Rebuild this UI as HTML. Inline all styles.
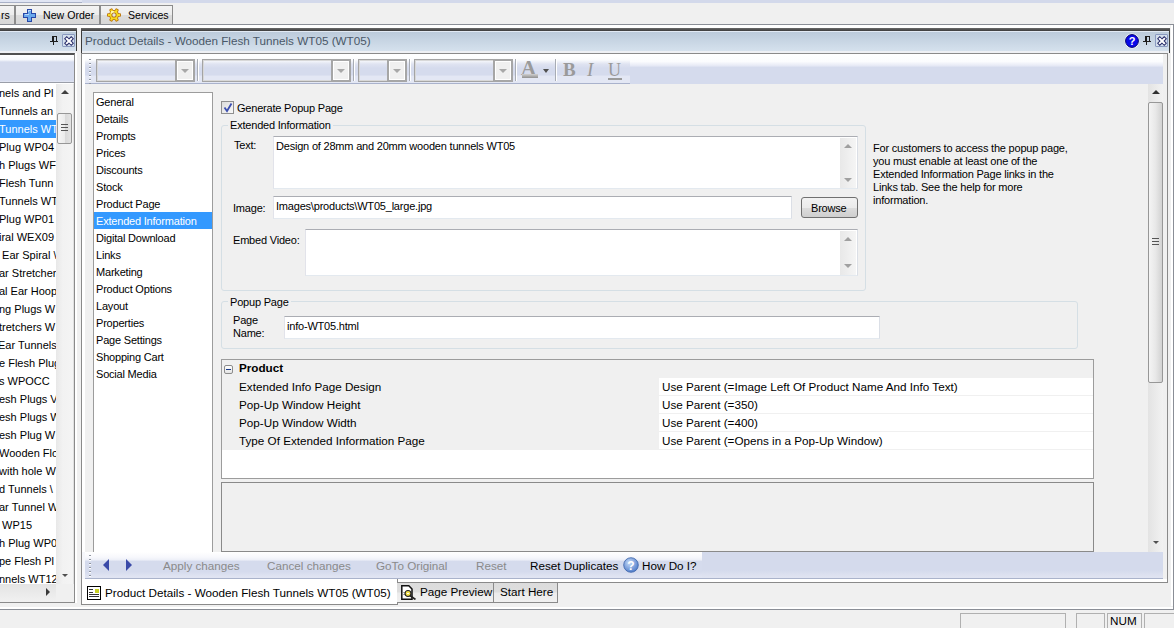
<!DOCTYPE html>
<html><head><meta charset="utf-8">
<style>
html,body{margin:0;padding:0;}
body{width:1174px;height:628px;overflow:hidden;position:relative;background:#f0f0f0;font-family:"Liberation Sans",sans-serif;color:#000;}
.a{position:absolute;}
.t{position:absolute;white-space:nowrap;font-size:11px;letter-spacing:-0.2px;line-height:13px;}
.s{position:absolute;white-space:nowrap;font-size:11.7px;line-height:14px;}
.tab{position:absolute;top:5px;height:19px;border:1px solid #8c8c8c;border-bottom:none;background:linear-gradient(#f3f3f3 0,#ececec 50%,#dcdcdc 51%,#d8d8d8 100%);box-sizing:border-box;}
.hl{background:#3399ff;color:#fff;}
.tb{position:absolute;border:1px solid #a4a4a4;box-shadow:inset 0 0 0 1px #d8d8d8;box-sizing:border-box;}
.ddb{position:absolute;top:-1px;right:-1px;width:20px;height:23px;border:2px solid #a6a6a6;box-shadow:inset 0 0 0 1px #fff;background:#f0f0f0;box-sizing:border-box;}
.ddb:after{content:"";position:absolute;left:4px;top:8px;border-left:4px solid transparent;border-right:4px solid transparent;border-top:4px solid #a8a8a8;}
.sep{position:absolute;width:1px;background:#a8acb4;border-right:1px solid #fff;}
.box{position:absolute;background:#fff;border:1px solid #abadb3;border-left-color:#e2e3ea;border-right-color:#dbdfe6;border-bottom-color:#e3e9ef;box-sizing:border-box;}
.grp{position:absolute;border:1px solid #d5dfe5;border-radius:3px;box-sizing:border-box;}
.pr{position:absolute;left:0;height:18px;font-size:11px;text-indent:-1px;line-height:18px;white-space:nowrap;}
</style></head><body>

<!-- top strip -->
<div class="a" style="left:0;top:0;width:1174px;height:3px;background:#d3d9eb;"></div><div class="a" style="left:0;top:0;width:82px;height:2px;background:#e0e5f3;border-bottom:1px solid #a9b1c7;"></div>

<!-- top tabs -->
<div class="tab" style="left:-20px;width:35px;"><span class="t" style="left:20px;top:3px;font-size:10.5px;letter-spacing:0;">rs</span></div>
<div class="tab" style="left:15px;width:85px;">
  <svg class="a" style="left:7px;top:3px" width="13" height="13" viewBox="0 0 13 13" shape-rendering="crispEdges"><path d="M4 0h5v4h4v5h-4v4h-5v-4h-4v-5h4z" fill="#2848a8"/><path d="M5 1h3v4h4v3h-4v4h-3v-4h-4v-3h4z" fill="#6aa8ec"/><path d="M5 1h1v4h-4v1h4v-1M5 1h3v1h-3z" fill="#b8d8fa"/></svg>
  <span class="t" style="left:27px;top:3px;font-size:10.6px;letter-spacing:0;">New Order</span></div>
<div class="tab" style="left:100px;width:73px;">
  <svg class="a" style="left:6px;top:2px" width="14" height="14" viewBox="0 0 14 14"><g fill="#c07a10"><circle cx="7" cy="7" r="5"/><rect x="5.2" y="0" width="3.6" height="14" rx="1" transform="rotate(30 7 7)"/><rect x="5.2" y="0" width="3.6" height="14" rx="1" transform="rotate(-30 7 7)"/><rect x="0" y="5.2" width="14" height="3.6" rx="1"/></g><g fill="#f8dc20"><circle cx="7" cy="7" r="4"/><rect x="6" y="1" width="2" height="12" transform="rotate(30 7 7)"/><rect x="6" y="1" width="2" height="12" transform="rotate(-30 7 7)"/><rect x="1" y="6" width="12" height="2"/></g><circle cx="5.5" cy="4.5" r="1.8" fill="#fff8b0"/><circle cx="7" cy="7" r="2.6" fill="#b07018"/><circle cx="7" cy="7" r="1.7" fill="#e4e4e4"/></svg>
  <span class="t" style="left:27px;top:3px;font-size:10.6px;letter-spacing:0;">Services</span></div>
<div class="a" style="left:0;top:24px;width:1174px;height:1px;background:#8a8e96;"></div>
<div class="a" style="left:0;top:25px;width:1174px;height:3px;background:#fff;"></div>

<!-- ============ LEFT PANEL ============ -->
<div class="a" style="left:0;top:28px;width:77px;height:3px;background:linear-gradient(#6a6a6a,#3c3c3c);"></div>
<div class="a" style="left:0;top:31px;width:76px;height:20px;background:linear-gradient(#e2eaf4 0,#e2eaf4 1px,#bccbdb 1px,#d5e1ed);border-right:1px solid #3c3c3c;"></div>
<!-- pin -->
<svg class="a" style="left:50px;top:35px" width="9" height="11" viewBox="0 0 9 11" shape-rendering="crispEdges"><g fill="#1e1e1e"><rect x="2" y="1" width="5" height="1"/><rect x="2" y="1" width="2" height="5"/><rect x="6" y="1" width="1" height="5"/><rect x="0" y="6" width="8" height="1"/><rect x="3" y="7" width="1" height="3"/></g></svg>
<div class="a" style="left:62px;top:34px;width:11px;height:11px;border:1px solid #8a9ac0;background:#d4dfec;border-radius:1px;"></div>
<svg class="a" style="left:64px;top:36px" width="10" height="10" viewBox="0 0 10 10"><path d="M2.8 2.8l4.4 4.4M7.2 2.8l-4.4 4.4" stroke="#262a68" stroke-width="4" stroke-linecap="square"/><path d="M2.8 2.8l4.4 4.4M7.2 2.8l-4.4 4.4" stroke="#fff" stroke-width="2" stroke-linecap="square"/></svg>
<div class="a" style="left:0;top:51px;width:76px;height:2px;background:#eef0f4;"></div>
<div class="a" style="left:0;top:53px;width:75px;height:550px;border-top:2px solid #505050;border-right:1px solid #8a8a8a;border-bottom:1px solid #8a8a8a;box-sizing:border-box;background:#f0f0f0;"></div>
<div class="a" style="left:0;top:55px;width:74px;height:27px;background:linear-gradient(#ffffff 0,#f6f8fc 18%,#d5dbed 26%,#d5dbed 94%,#e3e7f3 100%);"></div><div class="a" style="left:0;top:82px;width:74px;height:1px;background:#9a9ea8;"></div><div class="a" style="left:0;top:83px;width:73px;height:1px;background:#fff;"></div>
<!-- left list -->
<div class="a" style="left:0;top:84px;width:73px;height:500px;background:#fff;border-right:1px solid #e0e0e0;overflow:hidden;" id="llist">
<div class="pr" style="top:0px;width:56px;padding-left:0;">nels and Pl</div>
<div class="pr" style="top:18px;width:56px;padding-left:0;">Tunnels an</div>
<div class="pr hl" style="top:36px;width:56px;padding-left:0;">Tunnels WT</div>
<div class="pr" style="top:54px;width:56px;padding-left:0;">Plug WP04</div>
<div class="pr" style="top:72px;width:56px;padding-left:0;">h Plugs WF</div>
<div class="pr" style="top:90px;width:56px;padding-left:0;">Flesh Tunn</div>
<div class="pr" style="top:108px;width:56px;padding-left:0;">Tunnels WT</div>
<div class="pr" style="top:126px;width:56px;padding-left:0;">Plug WP01</div>
<div class="pr" style="top:144px;width:56px;padding-left:0;">iral WEX09</div>
<div class="pr" style="top:162px;width:56px;padding-left:0;">&nbsp;Ear Spiral \</div>
<div class="pr" style="top:180px;width:56px;padding-left:0;">ar Stretcher</div>
<div class="pr" style="top:198px;width:56px;padding-left:0;">al Ear Hoop</div>
<div class="pr" style="top:216px;width:56px;padding-left:0;">ng Plugs W</div>
<div class="pr" style="top:234px;width:56px;padding-left:0;">tretchers W</div>
<div class="pr" style="top:252px;width:56px;padding-left:0;text-indent:-2px;">Ear Tunnels</div>
<div class="pr" style="top:270px;width:56px;padding-left:0;">e Flesh Plug</div>
<div class="pr" style="top:288px;width:56px;padding-left:0;">s WPOCC</div>
<div class="pr" style="top:306px;width:56px;padding-left:0;">esh Plugs V</div>
<div class="pr" style="top:324px;width:56px;padding-left:0;">esh Plugs W</div>
<div class="pr" style="top:342px;width:56px;padding-left:0;">esh Plug W</div>
<div class="pr" style="top:360px;width:56px;padding-left:0;">Wooden Flo</div>
<div class="pr" style="top:378px;width:56px;padding-left:0;">with hole W</div>
<div class="pr" style="top:396px;width:56px;padding-left:0;">d Tunnels \</div>
<div class="pr" style="top:414px;width:56px;padding-left:0;">ar Tunnel W</div>
<div class="pr" style="top:432px;width:56px;padding-left:0;">&nbsp;WP15</div>
<div class="pr" style="top:450px;width:56px;padding-left:0;">h Plug WP0</div>
<div class="pr" style="top:468px;width:56px;padding-left:0;">pe Flesh Pl</div>
<div class="pr" style="top:486px;width:56px;padding-left:0;">nnels WT12</div>
</div>
<!-- left vscroll -->
<div class="a" style="left:56px;top:84px;width:17px;height:500px;background:linear-gradient(90deg,#e8e8e8,#f2f2f2 40%,#f4f4f4);"></div>
<div class="a" style="left:61px;top:90px;border-left:4px solid transparent;border-right:4px solid transparent;border-bottom:4px solid #404040;"></div>
<div class="a" style="left:62px;top:574px;border-left:3.5px solid transparent;border-right:3.5px solid transparent;border-top:3.5px solid #505050;"></div>
<div class="a" style="left:57px;top:113px;width:15px;height:31px;border:1px solid #979797;border-radius:2px;background:linear-gradient(90deg,#f6f6f6,#ececec 50%,#d8d8d8 51%,#e4e4e4);box-sizing:border-box;"></div>
<div class="a" style="left:61px;top:124px;width:7px;height:1px;background:#555;box-shadow:0 3px 0 #555,0 6px 0 #555;"></div>
<!-- left hscroll -->
<div class="a" style="left:0;top:584px;width:56px;height:17px;background:linear-gradient(#e4e4e4,#f0f0f0);"></div>
<div class="a" style="left:56px;top:584px;width:18px;height:17px;background:#f0f0f0;"></div>
<div class="a" style="left:46px;top:588px;border-top:4px solid transparent;border-bottom:4px solid transparent;border-left:4px solid #3a3a3a;"></div>

<!-- separator -->
<div class="a" style="left:77px;top:28px;width:4px;height:578px;background:#f0f0f0;"></div><div class="a" style="left:75px;top:53px;width:2px;height:550px;background:#fff;"></div>

<!-- ============ RIGHT PANEL ============ -->
<div class="a" style="left:81px;top:28px;width:1093px;height:3px;background:linear-gradient(#6a6a6a,#3c3c3c);"></div>
<div class="a" style="left:81px;top:31px;width:1087px;height:20px;background:linear-gradient(#e2eaf4 0,#e2eaf4 1px,#bccbdb 1px,#d5e1ed);border-left:1px solid #3c3c3c;border-right:1px solid #3c3c3c;"></div>
<div class="s" style="left:85px;top:34px;color:#4a5868;font-size:11.7px;">Product Details - Wooden Flesh Tunnels WT05 (WT05)</div>
<!-- help/pin/close -->
<svg class="a" style="left:1124px;top:33px" width="16" height="16" viewBox="0 0 16 16"><circle cx="8" cy="8" r="7.4" fill="#fff" opacity="0.85"/><circle cx="8" cy="8" r="6.4" fill="#0a0ae8" stroke="#000070" stroke-width="1"/><text x="8" y="12.3" font-family="Liberation Sans" font-weight="bold" font-size="11" text-anchor="middle" fill="#fff">?</text></svg>
<svg class="a" style="left:1143px;top:35px" width="9" height="11" viewBox="0 0 9 11" shape-rendering="crispEdges"><g fill="#1e1e1e"><rect x="2" y="1" width="5" height="1"/><rect x="2" y="1" width="2" height="5"/><rect x="6" y="1" width="1" height="5"/><rect x="0" y="6" width="8" height="1"/><rect x="3" y="7" width="1" height="3"/></g></svg>
<div class="a" style="left:1155px;top:34px;width:11px;height:11px;border:1px solid #8a9ac0;background:#d4dfec;border-radius:1px;"></div>
<svg class="a" style="left:1157px;top:36px" width="10" height="10" viewBox="0 0 10 10"><path d="M2.8 2.8l4.4 4.4M7.2 2.8l-4.4 4.4" stroke="#262a68" stroke-width="4" stroke-linecap="square"/><path d="M2.8 2.8l4.4 4.4M7.2 2.8l-4.4 4.4" stroke="#fff" stroke-width="2" stroke-linecap="square"/></svg>
<!-- right panel frame below title -->
<div class="a" style="left:81px;top:51px;width:1087px;height:2px;background:#eef0f4;border-left:1px solid #3c3c3c;border-right:1px solid #3c3c3c;"></div>
<div class="a" style="left:81px;top:53px;width:1087px;height:530px;border:1px solid #8a8a8a;box-sizing:border-box;"></div>
<div class="a" style="left:1170px;top:25px;width:1px;height:583px;background:#f0f0f0;"></div><div class="a" style="left:1171px;top:25px;width:2px;height:583px;background:#fff;"></div>
<div class="a" style="left:1173px;top:24px;width:1px;height:586px;background:#8a8e96;"></div>
<!-- toolbar band -->
<div class="a" style="left:82px;top:54px;width:1081px;height:30px;background:linear-gradient(#ffffff 0,#fbfcfe 25%,#e8ebf6 38%,#d5dbed 45%,#d5dbed 100%);"></div><div class="a" style="left:82px;top:54px;width:3px;height:524px;background:#fff;"></div>
<div class="a" style="left:85px;top:56px;width:545px;height:28px;background:linear-gradient(#ffffff 0,#fafbfd 15%,#dfe3f1 30%,#d5dbed 45%,#d5dbed 70%,#e3e7f4 75%,#e3e7f4 100%);border-bottom:1px solid #a9b2cc;box-sizing:border-box;"></div>
<div class="a" style="left:89px;top:58px;width:2px;height:26px;background:repeating-linear-gradient(transparent 0,transparent 1px,#9096a2 1px,#9096a2 2px,#fff 2px,#fff 3px,transparent 3px,transparent 4px);"></div>
<div class="tb" style="left:96px;top:59px;width:99px;height:23px;"><div class="ddb"></div></div>
<div class="sep" style="left:197px;top:59px;height:22px;"></div>
<div class="tb" style="left:202px;top:59px;width:149px;height:23px;"><div class="ddb"></div></div>
<div class="sep" style="left:353px;top:59px;height:22px;"></div>
<div class="tb" style="left:358px;top:59px;width:49px;height:23px;"><div class="ddb"></div></div>
<div class="sep" style="left:409px;top:59px;height:22px;"></div>
<div class="tb" style="left:414px;top:59px;width:99px;height:23px;"><div class="ddb"></div></div>
<div class="sep" style="left:515px;top:59px;height:22px;"></div>
<div class="a" style="left:521px;top:57px;font-family:'Liberation Serif';font-size:21px;font-weight:bold;color:#9a9a9a;line-height:23px;">A</div>
<div class="a" style="left:522px;top:74px;width:16px;height:4px;background:linear-gradient(#d0d0d0,#909090);"></div>
<div class="a" style="left:543px;top:69px;border-left:3.5px solid transparent;border-right:3.5px solid transparent;border-top:4px solid #505050;"></div>
<div class="sep" style="left:555px;top:59px;height:22px;"></div>
<div class="a" style="left:563px;top:59px;font-family:'Liberation Serif';font-size:19px;font-weight:bold;color:#9a9a9a;line-height:21px;">B</div>
<div class="a" style="left:587px;top:59px;font-family:'Liberation Serif';font-size:19px;font-style:italic;color:#9a9a9a;line-height:21px;">I</div>
<div class="a" style="left:608px;top:60px;font-family:'Liberation Serif';font-size:18px;color:#9a9a9a;line-height:20px;">U</div>
<div class="a" style="left:608px;top:78px;width:14px;height:2px;background:#9a9a9a;"></div>

<!-- nav list -->
<div class="a" style="left:93px;top:92px;width:120px;height:470px;background:#fff;border:1px solid #9c9c9c;box-sizing:border-box;"></div>
<div class="t" style="left:96px;top:96px;">General</div>
<div class="t" style="left:96px;top:113px;">Details</div>
<div class="t" style="left:96px;top:130px;">Prompts</div>
<div class="t" style="left:96px;top:147px;">Prices</div>
<div class="t" style="left:96px;top:164px;">Discounts</div>
<div class="t" style="left:96px;top:181px;">Stock</div>
<div class="t" style="left:96px;top:198px;">Product Page</div>
<div class="a hl" style="left:94px;top:212px;width:118px;height:17px;"></div>
<div class="t" style="left:96px;top:215px;color:#fff;">Extended Information</div>
<div class="t" style="left:96px;top:232px;">Digital Download</div>
<div class="t" style="left:96px;top:249px;">Links</div>
<div class="t" style="left:96px;top:266px;">Marketing</div>
<div class="t" style="left:96px;top:283px;">Product Options</div>
<div class="t" style="left:96px;top:300px;">Layout</div>
<div class="t" style="left:96px;top:317px;">Properties</div>
<div class="t" style="left:96px;top:334px;">Page Settings</div>
<div class="t" style="left:96px;top:351px;">Shopping Cart</div>
<div class="t" style="left:96px;top:368px;">Social Media</div>

<!-- checkbox -->
<div class="a" style="left:221px;top:101px;width:13px;height:13px;border:1px solid #8f8f8f;background:linear-gradient(135deg,#dcdcdc,#f8f8f8);box-sizing:border-box;"></div>
<svg class="a" style="left:223px;top:102px" width="10" height="11" viewBox="0 0 10 11"><path d="M1.5 5.5l2.5 3.5l4.5-7.5" fill="none" stroke="#3c4fb0" stroke-width="1.8"/></svg>
<div class="t" style="left:237px;top:102px;">Generate Popup Page</div>

<!-- Extended information group -->
<div class="grp" style="left:221px;top:125px;width:645px;height:166px;"></div>
<div class="t" style="left:228px;top:119px;background:#f0f0f0;padding:0 2px;">Extended Information</div>
<div class="t" style="left:234px;top:139px;">Text:</div>
<div class="box" style="left:273px;top:136px;width:585px;height:53px;"></div>
<div class="t" style="left:276px;top:140px;">Design of 28mm and 20mm wooden tunnels WT05</div>
<div class="a" style="left:840px;top:138px;width:16px;height:50px;background:linear-gradient(90deg,#e8e8e8,#f5f5f5);"></div>
<div class="a" style="left:844px;top:144px;border-left:4px solid transparent;border-right:4px solid transparent;border-bottom:4px solid #a0a0a0;"></div>
<div class="a" style="left:844px;top:178px;border-left:4px solid transparent;border-right:4px solid transparent;border-top:4px solid #a0a0a0;"></div>
<div class="t" style="left:233px;top:202px;">Image:</div>
<div class="box" style="left:273px;top:196px;width:519px;height:23px;"></div>
<div class="t" style="left:276px;top:200px;">Images\products\WT05_large.jpg</div>
<div class="a" style="left:801px;top:197px;width:57px;height:21px;border:1px solid #707070;border-radius:3px;background:linear-gradient(#f2f2f2 0,#ebebeb 50%,#dddddd 51%,#cfcfcf 100%);box-sizing:border-box;"></div>
<div class="t" style="left:811px;top:202px;">Browse</div>
<div class="t" style="left:233px;top:234px;">Embed Video:</div>
<div class="box" style="left:305px;top:229px;width:553px;height:47px;"></div>
<div class="a" style="left:840px;top:231px;width:16px;height:44px;background:linear-gradient(90deg,#e8e8e8,#f5f5f5);"></div>
<div class="a" style="left:844px;top:237px;border-left:4px solid transparent;border-right:4px solid transparent;border-bottom:4px solid #a0a0a0;"></div>
<div class="a" style="left:844px;top:264px;border-left:4px solid transparent;border-right:4px solid transparent;border-top:4px solid #a0a0a0;"></div>

<!-- help text -->
<div class="t" style="left:873px;top:142px;line-height:13px;">For customers to access the popup page,<br>you must enable at least one of the<br>Extended Information Page links in the<br>Links tab. See the help for more<br>information.</div>

<!-- Popup page group -->
<div class="grp" style="left:221px;top:301px;width:857px;height:48px;"></div>
<div class="t" style="left:228px;top:296px;background:#f0f0f0;padding:0 2px;">Popup Page</div>
<div class="t" style="left:233px;top:314px;line-height:13px;">Page<br>Name:</div>
<div class="box" style="left:284px;top:316px;width:596px;height:23px;"></div>
<div class="t" style="left:287px;top:320px;">info-WT05.html</div>

<!-- property grid -->
<div class="a" style="left:221px;top:359px;width:873px;height:120px;border:1px solid #9c9c9c;background:#fff;box-sizing:border-box;"></div>
<div class="a" style="left:222px;top:360px;width:871px;height:90px;background:#f0f0f0;"></div>
<div class="a" style="left:659px;top:378px;width:434px;height:72px;background:#fff;"></div>
<div class="a" style="left:659px;top:395px;width:434px;height:1px;background:#f0f0f0;"></div>
<div class="a" style="left:659px;top:413px;width:434px;height:1px;background:#f0f0f0;"></div>
<div class="a" style="left:659px;top:431px;width:434px;height:1px;background:#f0f0f0;"></div>
<div class="a" style="left:659px;top:449px;width:434px;height:1px;background:#f0f0f0;"></div>
<div class="a" style="left:224px;top:365px;width:9px;height:9px;border:1px solid #8c8c8c;border-radius:2px;background:linear-gradient(#fff,#e4e4e4);box-sizing:border-box;"></div>
<div class="a" style="left:226px;top:369px;width:5px;height:1px;background:#1a3a8a;"></div>
<div class="s" style="left:239px;top:361px;font-weight:bold;">Product</div>
<div class="s" style="left:239px;top:380px;">Extended Info Page Design</div>
<div class="s" style="left:239px;top:398px;">Pop-Up Window Height</div>
<div class="s" style="left:239px;top:416px;">Pop-Up Window Width</div>
<div class="s" style="left:239px;top:434px;">Type Of Extended Information Page</div>
<div class="s" style="left:662px;top:380px;">Use Parent (=Image Left Of Product Name And Info Text)</div>
<div class="s" style="left:662px;top:398px;">Use Parent (=350)</div>
<div class="s" style="left:662px;top:416px;">Use Parent (=400)</div>
<div class="s" style="left:662px;top:434px;">Use Parent (=Opens in a Pop-Up Window)</div>
<!-- description panel -->
<div class="a" style="left:221px;top:482px;width:873px;height:70px;border:1px solid #8a8a8a;background:#f0f0f0;box-sizing:border-box;"></div>

<!-- main vscroll -->
<div class="a" style="left:1148px;top:84px;width:15px;height:468px;background:linear-gradient(90deg,#e3e3e3,#f2f2f2);"></div>
<div class="a" style="left:1152px;top:90px;border-left:4px solid transparent;border-right:4px solid transparent;border-bottom:4px solid #303030;"></div>
<div class="a" style="left:1148px;top:102px;width:15px;height:281px;border:1px solid #979797;border-radius:2px;background:linear-gradient(90deg,#f4f4f4,#e8e8e8 50%,#d2d2d2);box-sizing:border-box;"></div>
<div class="a" style="left:1152px;top:238px;width:7px;height:1px;background:#555;box-shadow:0 3px 0 #555,0 6px 0 #555;"></div>
<div class="a" style="left:1153px;top:541px;border-left:3.5px solid transparent;border-right:3.5px solid transparent;border-top:3.5px solid #505050;"></div>

<!-- bottom toolbar -->
<div class="a" style="left:82px;top:552px;width:1081px;height:27px;background:linear-gradient(#d4daec 0,#d4daec 70%,#dfe3f1 95%);border-bottom:1px solid #aab3cb;box-sizing:border-box;"></div>
<div class="a" style="left:82px;top:552px;width:3px;height:27px;background:#f6f7fb;"></div><div class="a" style="left:85px;top:552px;width:617px;height:27px;background:linear-gradient(#ffffff 0,#f7f8fc 20%,#eef0f8 30%,#d5dbed 36%,#d5dbed 75%,#e0e4f2 95%);border-bottom:1px solid #aab3cb;box-sizing:border-box;"></div>
<div class="a" style="left:89px;top:554px;width:2px;height:24px;background:repeating-linear-gradient(transparent 0,transparent 1px,#9096a2 1px,#9096a2 2px,#fff 2px,#fff 3px,transparent 3px,transparent 4px);"></div>
<div class="a" style="left:103px;top:559px;border-top:6px solid transparent;border-bottom:6px solid transparent;border-right:6px solid #3a4aa8;"></div>
<div class="a" style="left:126px;top:559px;border-top:6px solid transparent;border-bottom:6px solid transparent;border-left:6px solid #3a4aa8;"></div>
<div class="s" style="left:163px;top:559px;color:#8a8a8a;">Apply changes</div>
<div class="s" style="left:267px;top:559px;color:#8a8a8a;">Cancel changes</div>
<div class="s" style="left:376px;top:559px;color:#8a8a8a;">GoTo Original</div>
<div class="s" style="left:476px;top:559px;color:#8a8a8a;">Reset</div>
<div class="s" style="left:530px;top:559px;">Reset Duplicates</div>
<svg class="a" style="left:623px;top:557px" width="16" height="16" viewBox="0 0 16 16"><defs><radialGradient id="hg" cx="0.4" cy="0.35" r="0.7"><stop offset="0" stop-color="#c8dcf8"/><stop offset="1" stop-color="#4a78c8"/></radialGradient></defs><circle cx="8" cy="8" r="7.3" fill="url(#hg)" stroke="#3a62a8" stroke-width="0.8"/><text x="8" y="12.5" font-family="Liberation Sans" font-weight="bold" font-size="12" text-anchor="middle" fill="#fff">?</text></svg>
<div class="s" style="left:642px;top:559px;">How Do I?</div>

<div class="a" style="left:82px;top:579px;width:1085px;height:3px;background:#fff;"></div>
<!-- document tabs -->
<div class="a" style="left:81px;top:579px;width:317px;height:26px;background:#fff;border:1px solid #8a8a8a;border-top:none;box-sizing:border-box;"></div>
<svg class="a" style="left:87px;top:586px" width="14" height="14" viewBox="0 0 14 14" shape-rendering="crispEdges"><rect x="0.5" y="0.5" width="13" height="13" fill="#fff" stroke="#000" stroke-width="1"/><rect x="8" y="3" width="4" height="4" fill="#c8d020"/><path d="M2 3.5h4M2 6.5h4M2 8.5h10M2 10.5h10" stroke="#333" stroke-width="1"/></svg>
<div class="s" style="left:105px;top:586px;">Product Details - Wooden Flesh Tunnels WT05 (WT05)</div>
<div class="a" style="left:397px;top:582px;width:97px;height:21px;border:1px solid #8a8a8a;border-left:none;background:linear-gradient(#dcdcdc 0,#dedede 45%,#ececec 55%,#f0f0f0 100%);box-sizing:border-box;"></div>
<svg class="a" style="left:401px;top:585px" width="17" height="15" viewBox="0 0 17 15"><path d="M0.8 0.8h7l3.2 3.2v10.2h-10.2z" fill="#fff" stroke="#111" stroke-width="1.5"/><path d="M2 7.5h3M2 9.5h3" stroke="#999" stroke-width="0.8"/><circle cx="7" cy="8.5" r="3" fill="#f2e04a" stroke="#222" stroke-width="1.2"/><path d="M6 8.5h2" stroke="#fff" stroke-width="1"/><path d="M9.2 10.8l5.3 3.6" stroke="#222" stroke-width="1.8"/></svg>
<div class="s" style="left:420px;top:585px;">Page Preview</div>
<div class="a" style="left:494px;top:582px;width:64px;height:21px;border:1px solid #8a8a8a;border-left:none;background:linear-gradient(#dcdcdc 0,#dedede 45%,#ececec 55%,#f0f0f0 100%);box-sizing:border-box;"></div>
<div class="s" style="left:500px;top:585px;">Start Here</div>

<!-- status bar -->
<div class="a" style="left:0;top:606px;width:1173px;height:3px;background:linear-gradient(#f0f0f0 0,#f0f0f0 33%,#fff 34%);"></div>
<div class="a" style="left:0;top:609px;width:1174px;height:1px;background:#8a8e96;"></div>
<div class="a" style="left:960px;top:613px;width:106px;height:20px;border:1px solid #b0b0b0;box-sizing:border-box;"></div>
<div class="a" style="left:1076px;top:613px;width:29px;height:20px;border:1px solid #b0b0b0;box-sizing:border-box;"></div>
<div class="a" style="left:1107px;top:613px;width:35px;height:20px;border:1px solid #b0b0b0;box-sizing:border-box;"></div>
<div class="s" style="left:1110px;top:614px;">NUM</div>
<div class="a" style="left:1144px;top:613px;width:40px;height:20px;border:1px solid #b0b0b0;box-sizing:border-box;"></div>

</body></html>
